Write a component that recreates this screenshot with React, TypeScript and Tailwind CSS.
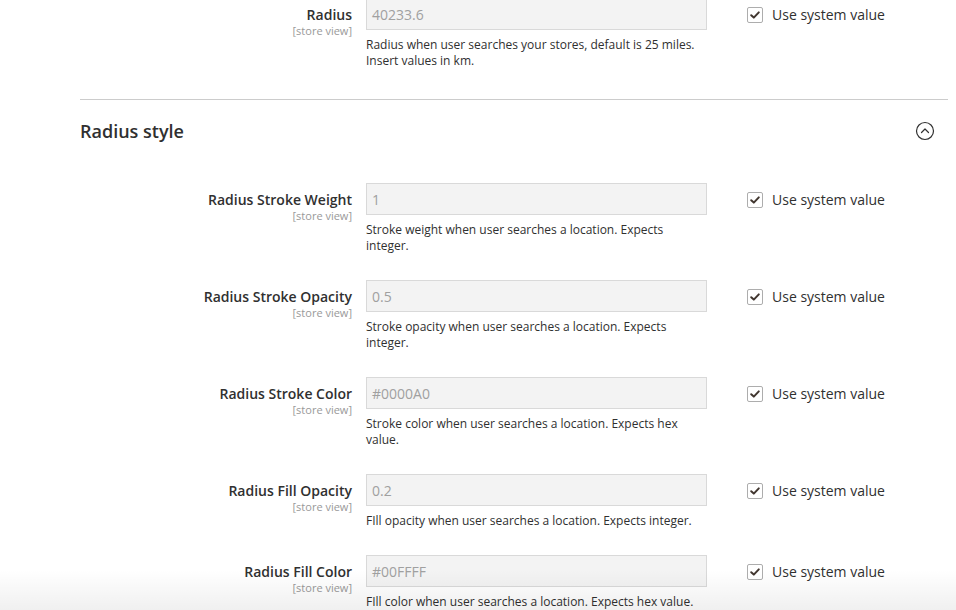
const rows = [
  {
    label: "Radius Stroke Weight",
    value: "1",
    note: "Stroke weight when user searches a location. Expects integer.",
  },
  {
    label: "Radius Stroke Opacity",
    value: "0.5",
    note: "Stroke opacity when user searches a location. Expects integer.",
  },
  {
    label: "Radius Stroke Color",
    value: "#0000A0",
    note: "Stroke color when user searches a location. Expects hex value.",
  },
  {
    label: "Radius Fill Opacity",
    value: "0.2",
    note: "FIll opacity when user searches a location. Expects integer.",
  },
  {
    label: "Radius Fill Color",
    value: "#00FFFF",
    note: "FIll color when user searches a location. Expects hex value.",
  },
];

const Check = () => (
  <span className="w-4 h-4 rounded-[2px] border border-[#adadad] bg-white flex items-center justify-center">
    <svg width="12" height="12" viewBox="0 0 12 12" fill="none">
      <path d="M2.2 6.2 L4.8 8.6 L9.8 3.4" stroke="#41362f" strokeWidth="2" strokeLinecap="round" strokeLinejoin="round" />
    </svg>
  </span>
);

const Field = ({ label, value, note, last }: { label: string; value: string; note: string; last?: boolean }) => (
  <div className={`flex ${last ? "" : "mb-[26px]"}`}>
    <div className="w-[272px] pt-[8px] text-right">
      <div className="text-[14px] leading-[18px] font-semibold text-[#303030]">{label}</div>
      <div className="mt-[1px] text-[11px] leading-[12px] text-[#999999]">[store view]</div>
    </div>
    <div className="ml-[14px] w-[341px]">
      <div className="h-8 border border-[#d9d9d9] bg-[#f3f3f3] px-[5px] flex items-center text-[14px] text-[#a0a0a0]">
        {value}
      </div>
      <p className="mt-[7px] text-[12px] leading-[16px] text-[#303030]">{note}</p>
    </div>
    <div className="ml-[40px] h-[34px] flex items-center gap-[9px]">
      <Check />
      <span className="text-[14px] leading-[20px] text-[#303030]">Use system value</span>
    </div>
  </div>
);

export default function App() {
  return (
    <div
      className="relative h-[610px] w-[956px] overflow-hidden bg-white"
      style={{ fontFamily: '"Open Sans", "Noto Sans", sans-serif' }}
    >
      <div className="ml-[80px] w-[868px] -mt-[2px]">
        <Field
          label="Radius"
          value="40233.6"
          note="Radius when user searches your stores, default is 25 miles. Insert values in km."
          last
        />

        <div className="mt-[30px] border-t border-[#cccccc]">
          <div className="h-[62px] flex items-center justify-between pr-[13px]">
            <h2 className="text-[18px] font-semibold text-[#303030]">Radius style</h2>
            <svg width="20" height="20" viewBox="0 0 20 20" fill="none">
              <circle cx="10" cy="10" r="8.5" stroke="#303030" strokeWidth="1.2" />
              <path d="M6.5 11.5 L10 8 L13.5 11.5" stroke="#303030" strokeWidth="1.2" strokeLinecap="round" strokeLinejoin="round" />
            </svg>
          </div>
        </div>

        <div className="mt-[21px]">
          {rows.map((r) => (
            <Field key={r.label} {...r} />
          ))}
        </div>
      </div>
      <div className="pointer-events-none absolute bottom-0 left-0 w-full h-[40px] bg-linear-to-b from-black/0 to-black/[0.06]" />
    </div>
  );
}
